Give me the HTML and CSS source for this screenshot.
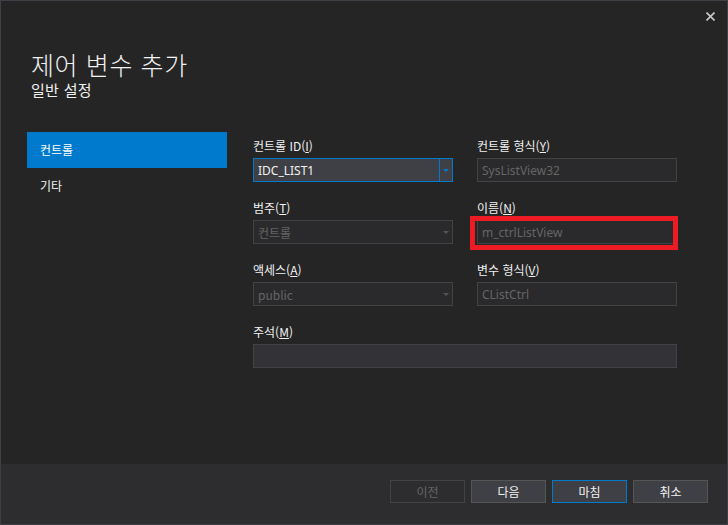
FILE: index.html
```html
<!DOCTYPE html>
<html lang="ko">
<head>
<meta charset="utf-8">
<title>제어 변수 추가</title>
<link rel="stylesheet" href="styles.css">
</head>
<body>
<div class="dialog">
  <div class="titlebar">
    <span class="close" aria-label="닫기">
      <svg width="9" height="9" viewBox="0 0 9 9"><path d="M0.5 0.5 L8.5 8.5 M8.5 0.5 L0.5 8.5" stroke="#c9c9c9" stroke-width="1.6"/></svg>
    </span>
  </div>
  <div class="header">
    <div class="title">제어 변수 추가</div>
    <div class="subtitle">일반 설정</div>
  </div>
  <div class="body">
    <nav class="nav">
      <div class="nav-item active">컨트롤</div>
      <div class="nav-item">기타</div>
    </nav>
    <div class="form">
      <div class="field">
        <div class="label">컨트롤 ID(<u>I</u>)</div>
        <div class="combo active">
          <span class="value">IDC_LIST1</span>
          <span class="drop"><span class="tri"></span></span>
        </div>
      </div>
      <div class="field">
        <div class="label">컨트롤 형식(<u>Y</u>)</div>
        <div class="input disabled"><span class="value">SysListView32</span></div>
      </div>
      <div class="field">
        <div class="label">범주(<u>T</u>)</div>
        <div class="combo disabled">
          <span class="value">컨트롤</span>
          <span class="drop"><span class="tri"></span></span>
        </div>
      </div>
      <div class="field marked">
        <div class="label">이름(<u>N</u>)</div>
        <div class="input-wrap">
          <div class="input disabled"><span class="value">m_ctrlListView</span></div>
          <div class="highlight"></div>
        </div>
      </div>
      <div class="field">
        <div class="label">액세스(<u>A</u>)</div>
        <div class="combo disabled">
          <span class="value">public</span>
          <span class="drop"><span class="tri"></span></span>
        </div>
      </div>
      <div class="field">
        <div class="label">변수 형식(<u>V</u>)</div>
        <div class="input disabled"><span class="value">CListCtrl</span></div>
      </div>
      <div class="field wide">
        <div class="label">주석(<u>M</u>)</div>
        <div class="input enabled"><span class="value"></span></div>
      </div>
    </div>
  </div>
  <div class="footer">
    <button class="btn disabled">이전</button>
    <button class="btn">다음</button>
    <button class="btn default">마침</button>
    <button class="btn">취소</button>
  </div>
</div>
</body>
</html>
```

FILE: styles.css
```css
* { box-sizing: border-box; }
html, body {
  margin: 0;
  padding: 0;
  background: #252526;
}
body {
  font-family: "Noto Sans CJK KR", "Noto Sans", sans-serif;
  color: #f1f1f1;
}
.dialog {
  width: 728px;
  height: 525px;
  border: 1px solid #3f3f46;
  background: #252526;
  display: flex;
  flex-direction: column;
}
.titlebar {
  height: 28px;
  display: flex;
  justify-content: flex-end;
  align-items: flex-start;
  padding: 11px 12px 0 0;
}
.close {
  width: 9px;
  height: 9px;
  display: block;
}
.close svg { display: block; }
.header {
  padding-left: 30px;
  height: 103px;
}
.title {
  font-size: 25px;
  font-weight: 300;
  line-height: 32px;
  letter-spacing: 0.6px;
  margin-top: 19px;
}
.subtitle {
  font-size: 15px;
  line-height: 20px;
  margin-top: 0;
  letter-spacing: 0.3px;
}
.body {
  flex: 1;
  display: flex;
}
.nav {
  width: 200px;
  margin-left: 26px;
}
.nav-item {
  height: 36px;
  line-height: 36px;
  padding-left: 13px;
  font-size: 12px;
}
.nav-item.active {
  background: #007acc;
  color: #ffffff;
}
.form {
  margin-left: 26px;
  display: grid;
  grid-template-columns: 200px 200px;
  column-gap: 24px;
  row-gap: 14px;
  align-content: start;
  padding-top: 2px;
}
.field.wide { grid-column: 1 / 3; }
.label {
  font-size: 12px;
  line-height: 24px;
  color: #f1f1f1;
}
.label u { text-underline-offset: 1px; }
.input, .combo {
  height: 24px;
  border: 1px solid #434346;
  background: #2a2a2c;
  display: flex;
  align-items: center;
  font-family: "Noto Sans", "Noto Sans CJK KR", sans-serif;
  font-size: 12px;
}
.value {
  padding-left: 4px;
  flex: 1;
  color: #656565;
  white-space: nowrap;
}
.input.enabled { background: #333337; }
.combo.active {
  border-color: #007acc;
  background: #3f3f46;
}
.combo.active .value { color: #f1f1f1; }
.combo.disabled .value { font-family: "Noto Sans CJK KR", sans-serif; }
.drop {
  width: 13px;
  height: 100%;
  display: flex;
  align-items: center;
  justify-content: center;
}
.combo.active .drop { border-left: 1px solid #007acc; }
.tri {
  width: 0;
  height: 0;
  border-left: 3px solid transparent;
  border-right: 3px solid transparent;
  border-top: 3px solid #555558;
  margin-top: 1px;
}
.combo.active .tri { border-top-color: #007acc; }
.input-wrap { position: relative; }
.highlight {
  position: absolute;
  left: -7px;
  top: -4px;
  width: 208px;
  height: 34px;
  border: 5px solid #ed1c24;
}
.footer {
  height: 60px;
  background: #2d2d30;
  display: flex;
  justify-content: flex-end;
  align-items: flex-start;
  gap: 6px;
  padding: 16px 19px 0 0;
}
.btn {
  width: 75px;
  height: 23px;
  border: 1px solid #555555;
  background: #3f3f46;
  color: #f1f1f1;
  font-family: "Noto Sans CJK KR", sans-serif;
  font-size: 12px;
  padding: 0;
  margin: 0;
}
.btn.disabled {
  background: #2d2d30;
  border-color: #434346;
  color: #656565;
}
.btn.default { border-color: #007acc; }
```
